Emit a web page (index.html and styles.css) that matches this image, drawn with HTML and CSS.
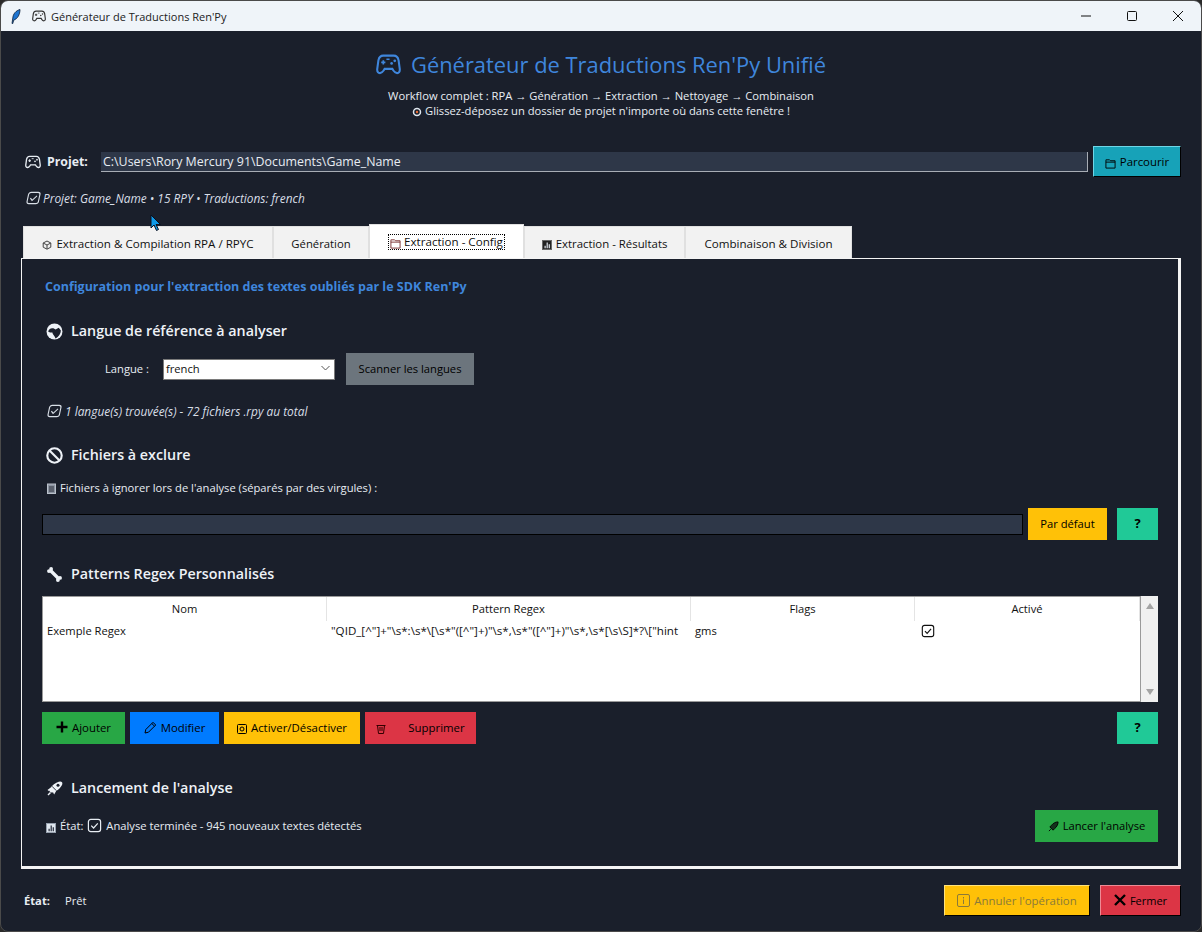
FILE: index.html
```html
<!DOCTYPE html>
<html lang="fr">
<head>
  <meta charset="UTF-8">
  <title>Générateur de Traductions Ren'Py</title>
  <link rel="stylesheet" href="styles.css">
</head>
<body>

  <svg class="defs" width="0" height="0">
    <symbol id="i-pad" viewBox="0 0 24 24">
      <path d="M7 3.500h10c3 0 4.200 2 4.700 4.500l1.100 8.300c.3 2.700-1 4-2.600 4-1.500 0-2.500-1-3.500-2.500l-1-1.600H8.300l-1 1.600c-1 1.500-2 2.500-3.500 2.500-1.600 0-2.900-1.300-2.600-4L2.300 8C2.800 5.500 4 3.500 7 3.500z" fill="none" stroke="currentColor" stroke-width="2"/>
      <path d="M7 8v4M5 10h4" stroke="currentColor" stroke-width="1.600"/>
      <circle cx="15" cy="11" r="1.300" fill="currentColor"/>
      <circle cx="18" cy="8.500" r="1.300" fill="currentColor"/>
      <path d="M10 7h3" stroke="currentColor" stroke-width="1.300"/>
    </symbol>
    <symbol id="i-check" viewBox="0 0 16 16">
      <rect x="1.500" y="1.500" width="13" height="13" rx="2.500" fill="none" stroke="currentColor" stroke-width="1.300"/>
      <path d="M4.500 8.200l2.500 2.500 4.500-5" fill="none" stroke="currentColor" stroke-width="1.300"/>
    </symbol>
    <symbol id="i-folder" viewBox="0 0 12 12">
      <path d="M1 3V2h4l1 1h5v8H1z M1 4.500h10" fill="none" stroke="currentColor" stroke-width="1"/>
    </symbol>
  </svg>

  <div class="window">

    <div class="titlebar">
      <svg class="quill" width="10" height="15" viewBox="0 0 10 15">
        <path d="M9 .5C5 1.500 2 5 1.800 9L1 14.500l.7.200 1.100-3.700C6.500 10 9 5.500 9 .5z" fill="#1e74d0" stroke="#0c2038" stroke-width=".8"/>
      </svg>
      <svg class="title-pad" width="14" height="14"><use href="#i-pad"/></svg>
      <span class="title-text">Générateur de Traductions Ren'Py</span>
      <div class="winbtns">
        <svg width="12" height="12" viewBox="0 0 12 12"><path d="M1 6h10" stroke="#111"/></svg>
        <svg width="12" height="12" viewBox="0 0 12 12"><rect x="1.500" y="1.500" width="9" height="9" rx="1" fill="none" stroke="#111"/></svg>
        <svg width="12" height="12" viewBox="0 0 12 12"><path d="M1 1l10 10M11 1L1 11" stroke="#111"/></svg>
      </div>
    </div>

    <div class="main">

      <header class="header">
        <h1>
          <svg width="25" height="25"><use href="#i-pad"/></svg>
          Générateur de Traductions Ren'Py Unifié
        </h1>
        <p>Workflow complet : RPA → Génération → Extraction → Nettoyage → Combinaison</p>
        <p>
          <svg class="mini" width="10" height="10" viewBox="0 0 10 10"><circle cx="5" cy="5" r="3.500" fill="none" stroke="#dfe6ee" stroke-width="1.500"/><circle cx="5" cy="5" r="1.200" fill="#e86a33"/></svg>
          Glissez-déposez un dossier de projet n'importe où dans cette fenêtre !
        </p>
      </header>

      <div class="project-row">
        <svg class="project-pad" width="16" height="16"><use href="#i-pad"/></svg>
        <label class="project-label">Projet:</label>
        <div class="entry project-entry">C:\Users\Rory Mercury 91\Documents\Game_Name</div>
        <button class="btn-raised btn-browse">
          <svg class="ico" width="11" height="11"><use href="#i-folder"/></svg>
          Parcourir
        </button>
      </div>

      <div class="project-info">
        <svg class="skew" width="17" height="14"><use href="#i-check"/></svg>
        Projet: Game_Name • 15 RPY • Traductions: french
      </div>

      <div class="tabs">
        <div class="tab tab-first">
          <svg class="ico" width="10" height="10" viewBox="0 0 10 10"><path d="M5 1l3.800 2v4.200L5 9.200 1.200 7.200V3zM1.200 3L5 5l3.800-2M5 5v4" fill="#eee" stroke="#444"/></svg>
          Extraction &amp; Compilation RPA / RPYC
        </div>
        <div class="tab tab-gen">Génération</div>
        <div class="tab tab-active">
          <span class="focus">
            <svg class="ico ico-red" width="11" height="11"><use href="#i-folder"/></svg>
            Extraction - Config
          </span>
        </div>
        <div class="tab tab-res">
          <svg class="ico" width="10" height="10" viewBox="0 0 12 12"><rect x=".5" y=".5" width="11" height="11" fill="#222" stroke="#666"/><path d="M3 10V7h1.500v3zM5.500 10V3H7v7zM8 10V5h1.500v5z" fill="#d8dde4"/></svg>
          Extraction - Résultats
        </div>
        <div class="tab tab-comb">Combinaison &amp; Division</div>
      </div>

      <section class="panel">
        <div class="config-title">Configuration pour l'extraction des textes oubliés par le SDK Ren'Py</div>

        <h2 class="section-title title-lang">
          <svg width="17" height="17" viewBox="0 0 16 16">
            <circle cx="8" cy="8" r="7.500" fill="#eef2f7"/>
            <path d="M2 8c1-3 3-3.500 5-3l2 1 3-1.500 2 2.500c0 3-2 6-5 7.500C8 12 6 10.500 6 9 4.500 9 3 9 2 8z" fill="#1a1f2b"/>
          </svg>
          Langue de référence à analyser
        </h2>

        <div class="lang-row">
          <label class="lang-label">Langue :</label>
          <div class="combo">
            <span>french</span>
            <svg width="9" height="6" viewBox="0 0 9 6"><path d="M.5 1l4 4 4-4" fill="none" stroke="#555"/></svg>
          </div>
          <button class="btn btn-scan">Scanner les langues</button>
        </div>

        <div class="lang-info">
          <svg class="skew" width="17" height="14"><use href="#i-check"/></svg>
          1 langue(s) trouvée(s) - 72 fichiers .rpy au total
        </div>

        <h2 class="section-title title-excl">
          <svg width="17" height="17" viewBox="0 0 16 16">
            <circle cx="8" cy="8" r="6.800" fill="none" stroke="currentColor" stroke-width="2"/>
            <path d="M3.300 3.300l9.400 9.400" stroke="currentColor" stroke-width="2"/>
          </svg>
          Fichiers à exclure
        </h2>

        <div class="excl-label">
          <svg class="ico" width="9" height="11" viewBox="0 0 9 11"><rect x=".5" y="1" width="8" height="9.500" fill="#8b93a0" stroke="#b9c0ca"/><path d="M2 4h5M2 6h5M2 8h5" stroke="#2a2f3a"/></svg>
          Fichiers à ignorer lors de l'analyse (séparés par des virgules) :
        </div>

        <div class="excl-row">
          <div class="entry excl-entry"></div>
          <button class="btn btn-yellow btn-default">Par défaut</button>
          <button class="btn btn-help">?</button>
        </div>

        <h2 class="section-title title-regex">
          <svg width="17" height="17" viewBox="0 0 16 16">
            <path d="M3.500 3.500l9 9" stroke="currentColor" stroke-width="3.200"/>
            <circle cx="2.800" cy="4.800" r="1.800" fill="currentColor"/><circle cx="4.800" cy="2.800" r="1.800" fill="currentColor"/>
            <circle cx="11.200" cy="13.200" r="1.800" fill="currentColor"/><circle cx="13.200" cy="11.200" r="1.800" fill="currentColor"/>
          </svg>
          Patterns Regex Personnalisés
        </h2>

        <div class="table-wrap">
          <div class="table">
            <div class="cell-head col-nom">Nom</div>
            <div class="cell-head col-pat">Pattern Regex</div>
            <div class="cell-head col-flags">Flags</div>
            <div class="cell-head col-act">Activé</div>
            <div class="cell">Exemple Regex</div>
            <div class="cell cell-pat">"QID_[^"]+"\s*:\s*\[\s*"([^"]+)"\s*,\s*"([^"]+)"\s*,\s*[\s\S]*?\["hint</div>
            <div class="cell">gms</div>
            <div class="cell cell-act"><svg width="14" height="14"><use href="#i-check"/></svg></div>
          </div>
          <div class="scrollbar">
            <span class="arrow-up"></span>
            <span class="arrow-down"></span>
          </div>
        </div>

        <div class="actions">
          <button class="btn btn-green btn-add">
            <svg width="12" height="12" viewBox="0 0 12 12"><path d="M6 .5v11M.5 6h11" stroke="#000" stroke-width="2.400"/></svg>
            Ajouter
          </button>
          <button class="btn btn-blue btn-edit">
            <svg width="13" height="13" viewBox="0 0 13 13"><path d="M1 12l.8-3.500L9 1.300l2.700 2.700-7.200 7.200zM7.800 2.500l2.700 2.700" fill="none" stroke="#000"/></svg>
            Modifier
          </button>
          <button class="btn btn-yellow btn-toggle">
            <svg class="ico" width="10" height="10" viewBox="0 0 10 10"><rect x=".5" y=".5" width="9" height="9" rx="1" fill="none" stroke="#000"/><circle cx="5" cy="5" r="2" fill="none" stroke="#000"/></svg>
            Activer/Désactiver
          </button>
          <button class="btn btn-red btn-del">
            <svg class="ico" width="10" height="10" viewBox="0 0 10 10"><path d="M.5 1.500h9M1.500 1.500l1 8h5l1-8M3 4h4M3 6h4" fill="none" stroke="#300"/></svg>
            <span>Supprimer</span>
          </button>
          <button class="btn btn-help btn-push">?</button>
        </div>

        <h2 class="section-title title-run">
          <svg width="18" height="17" viewBox="0 0 18 17">
            <ellipse cx="10" cy="7" rx="7.600" ry="3.400" transform="rotate(-38 10 7)" fill="currentColor"/>
            <circle cx="12" cy="5.300" r="1.500" fill="#1a1f2b"/>
            <path d="M6.200 6.500l4.300 4.300" stroke="#1a1f2b" stroke-width=".9"/>
            <path d="M1.500 10l3.200-2.600.8 1.200-2.300 2.600zM7 12.500l2-2.200 1 1-1.800 3.200z" fill="currentColor"/>
            <path d="M2 15l2.500-2.500" stroke="currentColor" stroke-width="1.500"/>
          </svg>
          Lancement de l'analyse
        </h2>

        <div class="run-row">
          <svg class="ico" width="10" height="10" viewBox="0 0 12 12"><rect x=".5" y=".5" width="11" height="11" fill="#dfe6ee" stroke="#9aa5b3"/><path d="M3 10V7h1.500v3zM5.500 10V3H7v7zM8 10V5h1.500v5z" fill="#2a3140"/></svg>
          <span class="run-state">État:</span>
          <svg class="run-check" width="15" height="15"><use href="#i-check"/></svg>
          <span>Analyse terminée - 945 nouveaux textes détectés</span>
          <button class="btn btn-green btn-run">
            <svg class="ico" width="11" height="11" viewBox="0 0 12 12"><path d="M11 1C8 1 5.500 2.500 3.500 5L2 6.500 5.500 10 7 8.500C9.500 6.500 11 4 11 1zM1 11l2-2" fill="#14301c" stroke="#000"/></svg>
            Lancer l'analyse
          </button>
        </div>
      </section>

      <footer class="footer">
        <strong>État:</strong>
        <span class="footer-state">Prêt</span>
        <button class="btn-raised btn-cancel">
          <svg width="13" height="13" viewBox="0 0 13 13"><rect x=".5" y=".5" width="12" height="12" rx="1.500" fill="none" stroke="#8a7a3a"/><path d="M6.500 3v1.500M6.500 5.500V10" stroke="#8a7a3a"/></svg>
          Annuler l'opération
        </button>
        <button class="btn-raised btn-close">
          <svg width="12" height="12" viewBox="0 0 12 12"><path d="M1 1l10 10M11 1L1 11" stroke="#000" stroke-width="2.400"/></svg>
          Fermer
        </button>
      </footer>
    </div>

    <svg class="cursor" width="12" height="18" viewBox="0 0 12 18">
      <path d="M1 1v13l3-3 2.500 5.500 2-1L6 10.500h4.500z" fill="#0f9ae8" stroke="#0a1020" stroke-width="1"/>
    </svg>
  </div>

</body>
</html>
```

FILE: styles.css
```css
* {
  box-sizing: border-box;
}
html, body {
  margin: 0;
  height: 100%;
  background: #2a2a2a;
}
body {
  font-family: "Open Sans", "Noto Sans", sans-serif;
  font-size: 11.2px;
  color: #e8edf3;
  overflow: hidden;
}
.defs {
  position: absolute;
}
button {
  font-family: inherit;
  font-size: 11.4px;
}
svg {
  flex: none;
}

.window {
  position: relative;
  width: 1202px;
  height: 932px;
  border: 1px solid #4a4a4a;
  border-radius: 8px;
  overflow: hidden;
  background: #1a1f2b;
  display: flex;
  flex-direction: column;
}

/* title bar */
.titlebar {
  height: 30px;
  flex: none;
  background: #eff4f9;
  color: #222;
  display: flex;
  align-items: center;
  padding-left: 10px;
  font-size: 11px;
}
.quill {
  margin-right: 11px;
}
.title-pad {
  margin-right: 5px;
  color: #333;
}
.winbtns {
  margin-left: auto;
  display: flex;
  gap: 34px;
  padding-right: 17px;
}

/* main */
.main {
  flex: 1;
  display: flex;
  flex-direction: column;
  padding: 0 20px 0 20px;
}
.header {
  text-align: center;
  height: 115px;
  padding-top: 20px;
}
.header h1 {
  margin: 0 0 10px 0;
  font-size: 21.9px;
  line-height: 27px;
  font-weight: 500;
  color: #3f86dc;
  display: flex;
  justify-content: center;
  align-items: center;
  gap: 10px;
}
.header p {
  margin: 0;
  line-height: 15px;
}
.mini {
  vertical-align: -2px;
}

.project-row {
  display: flex;
  align-items: center;
  height: 31px;
  padding-left: 4px;
}
.project-pad {
  margin-right: 6px;
}
.project-label {
  font-weight: 700;
  font-size: 12.3px;
  width: 54px;
}
.entry {
  background: #2e3748;
  color: #e8edf3;
}
.project-entry {
  flex: 1;
  height: 20px;
  margin-top: 1px;
  line-height: 20px;
  padding-left: 2px;
  font-size: 12.4px;
  border-bottom: 1px solid #a8adb5;
  border-right: 1px solid #a8adb5;
}
.btn-raised {
  border: 1px solid;
  color: #000;
  display: flex;
  align-items: center;
  justify-content: center;
  gap: 4px;
  padding: 0;
}
.btn-browse {
  width: 88px;
  height: 31px;
  margin-left: 5px;
  background: #17a2b8;
  border-color: #6fd6e6 #000 #000 #6fd6e6;
}
.project-info {
  font-style: italic;
  font-size: 11.85px;
  color: #d8dee6;
  display: flex;
  align-items: center;
  gap: 1px;
  margin-top: 13px;
  padding-left: 4px;
  height: 16px;
}
.skew {
  transform: skewX(-12deg);
}
.ico {
  margin-top: 3px;
}

/* tabs */
.tabs {
  display: flex;
  align-items: flex-end;
  margin-top: 18px;
  padding-left: 2px;
  height: 34px;
  font-size: 11.6px;
}
.tab {
  height: 32px;
  padding-top: 2px;
  background: #f2f2f2;
  color: #111;
  border: 1px solid #e0e0e0;
  border-bottom: none;
  display: flex;
  align-items: center;
  justify-content: center;
  gap: 4px;
}
.tab-first { width: 250px; }
.tab-gen {
  width: 96px;
  font-size: 11.3px;
}
.tab-active {
  width: 155px;
  height: 34px;
  background: #fff;
  padding-top: 0;
}
.tab-res {
  width: 161px;
  font-size: 11.4px;
}
.tab-comb { width: 167px; }
.focus {
  border: 1px dotted #000;
  display: flex;
  align-items: center;
  gap: 3px;
  padding: 0 1px;
  height: 16px;
}
.ico-red {
  color: #7a3030;
}

/* panel */
.panel {
  height: 611px;
  border: solid #f4f4f4;
  border-width: 1px 3px 3px 1px;
  padding: 0 20px 0 20px;
  display: flex;
  flex-direction: column;
}
.config-title {
  font-weight: 700;
  font-size: 12.5px;
  color: #3f86dc;
  line-height: 17px;
  margin-top: 19px;
  padding-left: 3px;
}
.section-title {
  margin: 0;
  font-size: 14.3px;
  font-weight: 600;
  color: #eef2f7;
  line-height: 20px;
  display: flex;
  align-items: center;
  gap: 8px;
  padding-left: 4px;
}
.title-lang { margin-top: 26px; }
.title-excl { margin-top: 26px; }
.title-regex { margin-top: 24px; }
.title-run { margin-top: 34px; }
.title-run svg {
  margin-right: -1px;
}

.lang-row {
  display: flex;
  align-items: center;
  height: 32px;
  margin-top: 12px;
}
.lang-label {
  width: 121px;
  padding-left: 63px;
  padding-bottom: 2px;
}
.combo {
  width: 172px;
  height: 21px;
  background: #fff;
  color: #111;
  border: 1px solid #7a7a7a;
  display: flex;
  align-items: center;
  justify-content: space-between;
  padding: 0 4px 2px 2px;
}
.btn {
  border: none;
  height: 32px;
  padding: 0 0 2px 0;
  color: #000;
  display: flex;
  align-items: center;
  justify-content: center;
  gap: 4px;
}
.btn-scan {
  width: 128px;
  margin-left: 11px;
  background: #6c757d;
  font-size: 11.2px;
}
.lang-info {
  font-style: italic;
  font-size: 11.9px;
  color: #d8dee6;
  display: flex;
  align-items: center;
  gap: 2px;
  height: 16px;
  margin-top: 18px;
  padding-left: 4px;
}
.excl-label {
  display: flex;
  align-items: center;
  gap: 4px;
  height: 16px;
  margin-top: 14px;
  padding-left: 5px;
}
.excl-row {
  display: flex;
  align-items: center;
  height: 32px;
  margin-top: 13px;
}
.excl-entry {
  flex: 1;
  height: 21px;
  border: 1px solid #000;
}
.btn-yellow {
  background: #ffc107;
}
.btn-default {
  width: 79px;
  margin-left: 5px;
  font-size: 11.2px;
}
.btn-help {
  width: 41px;
  margin-left: 10px;
  background: #20c997;
  font-weight: 700;
  font-size: 13px;
}

/* table */
.table-wrap {
  display: flex;
  height: 106px;
  margin-top: 12px;
}
.table {
  flex: 1;
  background: #fff;
  color: #111;
  border: 1px solid #9a9a9a;
  display: grid;
  grid-template-columns: 284px 364px 224px 1fr;
  grid-template-rows: 24px 20px;
  align-content: start;
}
.cell-head {
  text-align: center;
  line-height: 24px;
  border-right: 1px solid #e4e4e4;
}
.cell {
  padding-left: 4px;
  line-height: 20px;
  white-space: nowrap;
  overflow: hidden;
}
.cell-pat {
  font-size: 11.6px;
}
.cell-act {
  padding-left: 6px;
  display: flex;
  align-items: center;
  color: #111;
}
.scrollbar {
  width: 17px;
  background: #f0f0f0;
  display: flex;
  flex-direction: column;
  justify-content: space-between;
  align-items: center;
  padding: 7px 0;
}
.arrow-up {
  border: solid transparent;
  border-width: 0 4.500px 6px;
  border-bottom-color: #a3a3a3;
}
.arrow-down {
  border: solid transparent;
  border-width: 6px 4.500px 0;
  border-top-color: #a3a3a3;
}

.actions {
  display: flex;
  gap: 5px;
  margin-top: 10px;
}
.btn-green { background: #28a745; }
.btn-blue { background: #007bff; }
.btn-red { background: #dc3545; }
.btn-add { width: 83px; }
.btn-edit { width: 89px; }
.btn-toggle { width: 136px; }
.btn-del {
  width: 111px;
  gap: 22px;
}
.btn-push {
  margin-left: auto;
}

.run-row {
  display: flex;
  align-items: center;
  height: 32px;
  margin-top: 12px;
  padding-left: 4px;
  gap: 4px;
}
.run-row span,
.run-check {
  margin-bottom: 2px;
}
.btn-run {
  width: 123px;
  margin-left: auto;
  font-size: 11.2px;
}

/* footer */
.footer {
  display: flex;
  align-items: center;
  height: 62px;
  padding-left: 3px;
}
.footer strong {
  width: 41px;
}
.btn-cancel {
  width: 146px;
  height: 31px;
  margin-left: auto;
  background: #ffc107;
  border-color: #ffe27a #000 #000 #ffe27a;
  color: #8a7a3a;
}
.btn-close {
  width: 81px;
  height: 31px;
  margin-left: 10px;
  background: #dc3545;
  border-color: #ee8a94 #000 #000 #ee8a94;
  font-size: 11px;
}

.cursor {
  position: absolute;
  left: 149px;
  top: 213px;
}
```
